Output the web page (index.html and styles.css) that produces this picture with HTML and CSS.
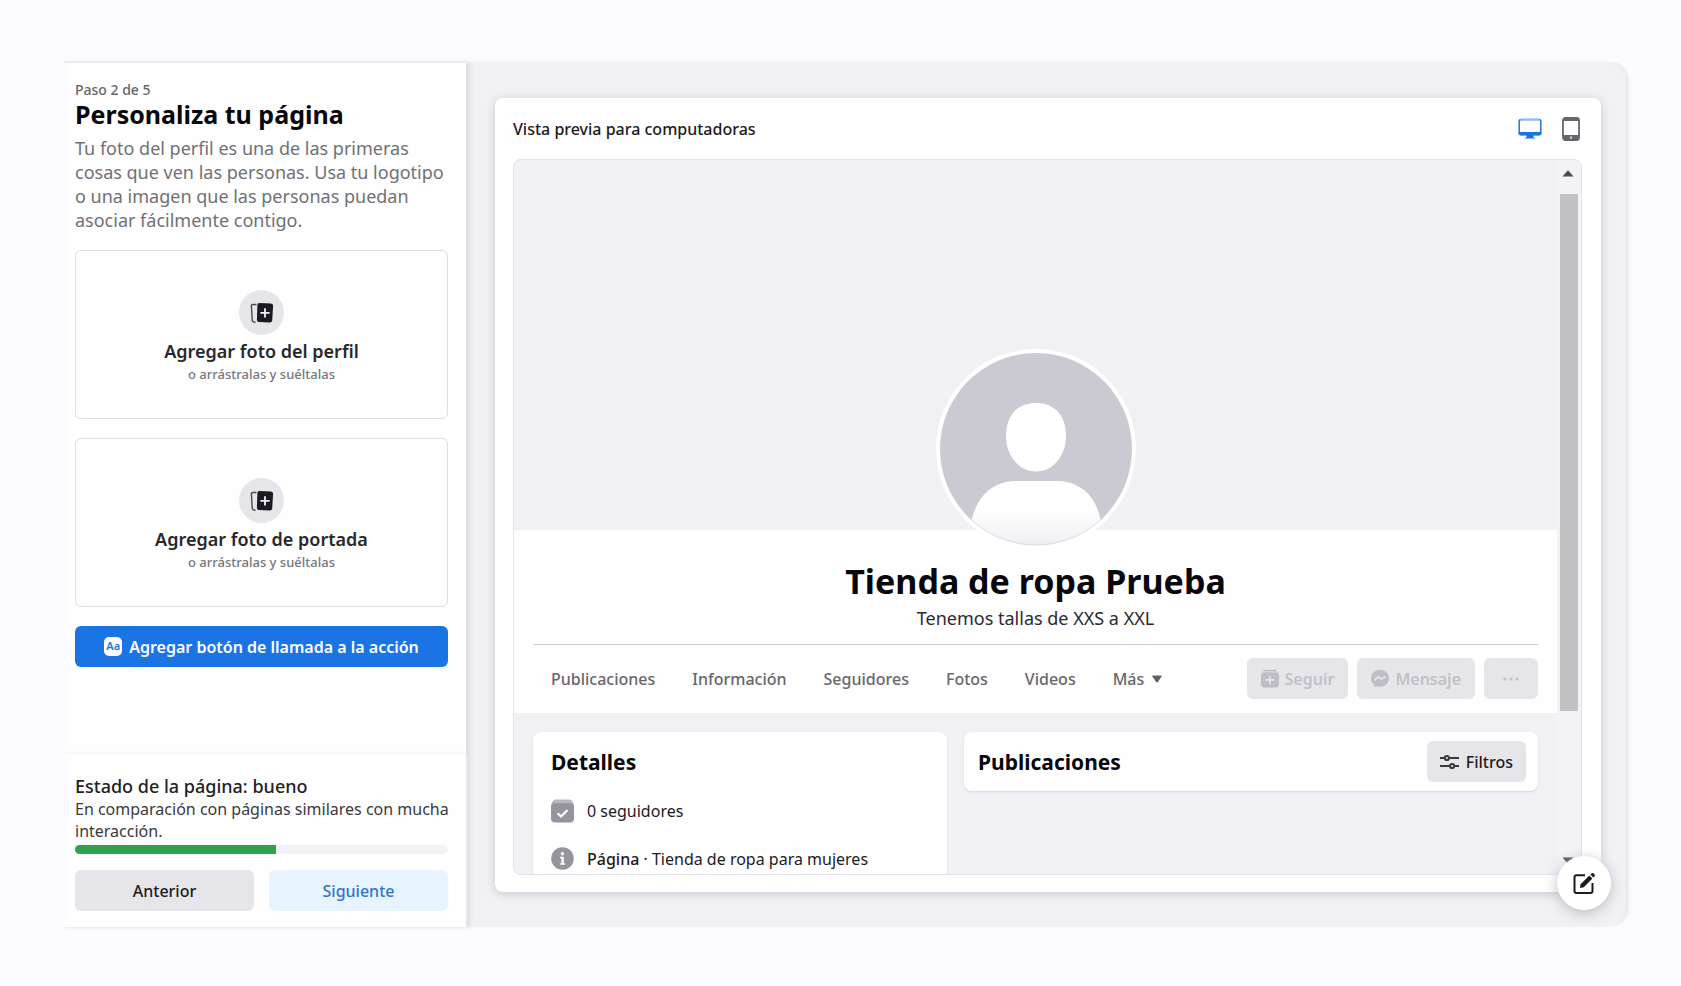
FILE: index.html
```html
<!DOCTYPE html>
<html lang="es">
<head>
<meta charset="utf-8">
<title>Personaliza tu página</title>
<link rel="stylesheet" href="styles.css">
</head>
<body>
<div class="app">
  <aside class="sidebar">
    <section class="setup">
      <p class="step">Paso 2 de 5</p>
      <h1 class="title">Personaliza tu página</h1>
      <p class="intro">Tu foto del perfil es una de las primeras cosas que ven las personas. Usa tu logotipo o una imagen que las personas puedan asociar fácilmente contigo.</p>
      <button class="drop" type="button">
        <span class="drop-icon"><svg width="24" height="24" viewBox="0 0 24 24"><path d="M6.500 3.500H3Q1.300 3.500 1.400 5L2.300 19.500Q2.500 21.200 5.500 21.200" fill="none" stroke="#4a4950" stroke-width="1.400"/><path d="M9.300 2L21 2.400Q23.200 2.600 23.100 4.800L22.200 19.500Q22 21.700 19.700 21.600L9 21.100Q6.800 20.900 6.900 18.700L7.400 4Q7.500 2 9.300 2Z" fill="#1b1a20"/><path d="M15 7.200V16.400M10.400 11.800H19.600" stroke="#f3f2f6" stroke-width="1.800"/></svg></span>
        <span class="drop-title">Agregar foto del perfil</span>
        <span class="drop-hint">o arrástralas y suéltalas</span>
      </button>
      <button class="drop" type="button">
        <span class="drop-icon"><svg width="24" height="24" viewBox="0 0 24 24"><path d="M6.500 3.500H3Q1.300 3.500 1.400 5L2.300 19.500Q2.500 21.200 5.500 21.200" fill="none" stroke="#4a4950" stroke-width="1.400"/><path d="M9.300 2L21 2.400Q23.200 2.600 23.100 4.800L22.200 19.500Q22 21.700 19.700 21.600L9 21.100Q6.800 20.900 6.900 18.700L7.400 4Q7.500 2 9.300 2Z" fill="#1b1a20"/><path d="M15 7.200V16.400M10.400 11.800H19.600" stroke="#f3f2f6" stroke-width="1.800"/></svg></span>
        <span class="drop-title">Agregar foto de portada</span>
        <span class="drop-hint">o arrástralas y suéltalas</span>
      </button>
      <button class="cta" type="button"><span class="cta-badge" aria-hidden="true">Aa</span>Agregar botón de llamada a la acción</button>
    </section>
    <footer class="status">
      <h2 class="status-title">Estado de la página: bueno</h2>
      <p class="status-text">En comparación con páginas similares con mucha interacción.</p>
      <div class="meter"><div class="meter-fill"></div></div>
      <div class="steps">
        <button class="nav-button" type="button">Anterior</button>
        <button class="nav-button next" type="button">Siguiente</button>
      </div>
    </footer>
  </aside>
  <main class="stage">
    <section class="preview">
      <header class="preview-bar">
        <h2 class="preview-title">Vista previa para computadoras</h2>
        <div class="devices">
          <button class="device" type="button" aria-label="Computadora"><svg width="24" height="22" viewBox="0 0 24 22"><rect x="1.200" y="1.500" width="21.600" height="15" rx="2" fill="#fbfdff" stroke="#2f7bd6" stroke-width="1.600"/><path d="M2.500 1.600H21.500" stroke="#8dbcf0" stroke-width="1.800"/><path d="M.6 14H23.400V15.500Q23.400 17.500 21.400 17.500H15.500V19L17.500 20.500H6.500L8.500 19V17.500H2.600Q.6 17.500.6 15.500Z" fill="#1b74e4"/></svg></button>
          <button class="device" type="button" aria-label="Celular"><svg width="18" height="24" viewBox="0 0 18 24"><rect x="1" y="1" width="16" height="22" rx="2.500" fill="#fff" stroke="#66656b" stroke-width="1.800"/><path d="M1 4V2.500Q1 .8 3 .8H15Q17 .8 17 2.500V4ZM1 18H17V21Q17 23.200 15 23.200H3Q1 23.200 1 21Z" fill="#66656b"/><circle cx="9" cy="20.600" r="1.300" fill="#c9c8cd"/></svg></button>
        </div>
      </header>
      <div class="frame">
        <div class="page">
          <div class="cover"></div>
          <div class="profile">
            <svg class="avatar" viewBox="0 0 200 200" role="img" aria-label="Foto del perfil">
              <defs><linearGradient id="body" x1="0" y1="0" x2="0" y2="1"><stop offset="0.400" stop-color="#fff"/><stop offset="1" stop-color="#edecf2"/></linearGradient><clipPath id="disc"><circle cx="100" cy="100" r="96"/></clipPath></defs>
              <circle cx="100" cy="100" r="100" fill="#fff"/>
              <circle cx="100" cy="100" r="96" fill="#cbcad3"/>
              <g clip-path="url(#disc)"><path d="M100 54C119 54 130 67 130 87C130 107 117 122.500 100 122.500C83 122.500 70 107 70 87C70 67 81 54 100 54Z" fill="#fff"/><path d="M34 200V182C37 148 57 132 80 132H121C144 132 164 148 166 182V200Z" fill="url(#body)"/></g>
              <path d="M32 167.800A96 96 0 0 0 168 167.800" fill="none" stroke="#dddce3" stroke-width="1"/>
            </svg>
            <h2 class="name">Tienda de ropa Prueba</h2>
            <p class="tagline">Tenemos tallas de XXS a XXL</p>
            <div class="toolbar">
              <nav class="tabs">
                <a href="#publicaciones">Publicaciones</a>
                <a href="#informacion">Información</a>
                <a href="#seguidores">Seguidores</a>
                <a href="#fotos">Fotos</a>
                <a href="#videos">Videos</a>
                <a class="more" href="#mas">Más <svg width="10" height="8" viewBox="0 0 10 8"><path d="M.8.5H9.200Q10 .8 9.600 1.600L5.700 7.200Q5 7.900 4.300 7.200L.4 1.600Q0 .8.8.5Z" fill="#626166"/></svg></a>
              </nav>
              <div class="actions">
                <button class="action" type="button" disabled><svg width="18" height="19" viewBox="0 0 19 20"><path d="M4 .8H15Q16.500.8 16.800 2.600H2.200Q2.500.8 4 .8Z" fill="#bfbec5"/><path d="M3 3.400H16Q19 3.400 19 6.500V16Q19 19.400 15.600 19.400H3.400Q0 19.400 0 16V6.500Q0 3.400 3 3.400Z" fill="#bfbec5"/><path d="M9.500 7V16M5 11.500H14" stroke="#e7e6eb" stroke-width="1.800"/></svg>Seguir</button>
                <button class="action" type="button" disabled><svg width="18" height="19" viewBox="0 0 19 20"><path d="M9.500.8C4.200.8 0 4.600 0 9.700C0 12.400 1.100 14.800 3 16.400V19.200L6 18.100C7.100 18.500 8.300 18.600 9.500 18.600C14.800 18.600 19 14.800 19 9.700C19 4.600 14.800.8 9.500.8Z" fill="#bfbec5"/><path d="M3.800 12L7.500 8L10.800 10.800L15.200 7.800" fill="none" stroke="#e7e6eb" stroke-width="1.800"/></svg>Mensaje</button>
                <button class="action dots" type="button" disabled aria-label="Más opciones"><svg width="16" height="4" viewBox="0 0 16 4"><circle cx="2" cy="2" r="1.600" fill="#c2c1c8"/><circle cx="8" cy="2" r="1.600" fill="#c2c1c8"/><circle cx="14" cy="2" r="1.600" fill="#c2c1c8"/></svg></button>
              </div>
            </div>
          </div>
          <div class="cards">
            <section class="details">
              <h3 class="card-title">Detalles</h3>
              <ul class="facts">
                <li><svg width="23" height="24" viewBox="0 0 23 24"><path d="M5 .5H18Q21.500.5 22.500 5H.5Q1.500.5 5 .5Z" fill="#b9b8c1"/><path d="M3 4.300H20Q23 4.300 23 7.500V19.500Q23 23.500 19 23.500H4Q0 23.500 0 19.500V7.500Q0 4.300 3 4.300Z" fill="#96959f"/><path d="M6.500 14.200L10 17.500L16.500 11" fill="none" stroke="#fff" stroke-width="2.200"/></svg><span>0 seguidores</span></li>
                <li><svg width="23" height="24" viewBox="0 0 23 24"><circle cx="11.500" cy="11.500" r="11.300" fill="#96959f"/><circle cx="11.500" cy="6.800" r="1.700" fill="#fff"/><path d="M9 9.800H12.800V16.300H14V17.800H9.200V16.300H10.400V11.300H9Z" fill="#fff"/></svg><span><b>Página</b> · Tienda de ropa para mujeres</span></li>
              </ul>
            </section>
            <section class="posts">
              <h3 class="card-title">Publicaciones</h3>
              <button class="filters" type="button"><svg width="19" height="16" viewBox="0 0 19 16"><path d="M0 4H4.300M9.500 4H19M0 12H9.500M14.700 12H19" stroke="#3a393f" stroke-width="1.800"/><circle cx="6.900" cy="4" r="2.100" fill="none" stroke="#3a393f" stroke-width="2"/><circle cx="12.100" cy="12" r="2.100" fill="none" stroke="#3a393f" stroke-width="2"/></svg>Filtros</button>
            </section>
          </div>
        </div>
        <div class="scroll">
          <svg width="12" height="7" viewBox="0 0 12 7"><path d="M6 .3L11.500 6.500H.5Z" fill="#4d4c52"/></svg>
          <div class="track"><div class="thumb"></div></div>
          <svg width="12" height="7" viewBox="0 0 12 7"><path d="M6 6.700L11.500.5H.5Z" fill="#4d4c52"/></svg>
        </div>
      </div>
    </section>
    <button class="compose" type="button" aria-label="Escribir"><svg width="24" height="24" viewBox="0 0 24 24"><path d="M13 4.200H4.500Q2.500 4.200 2.500 6.200V20Q2.500 22 4.500 22H18.500Q20.500 22 20.500 20V12" fill="none" stroke="#1b1a20" stroke-width="2"/><path d="M8 17L8.600 13.200L17.300 4.600L20.400 7.600L11.800 16.300Z" fill="#1b1a20"/><path d="M18.400 3.600L19.600 2.400Q20.600 1.500 21.600 2.400L22.500 3.300Q23.400 4.300 22.500 5.300L21.300 6.500Z" fill="#1b1a20"/></svg></button>
  </main>
</div>
</body>
</html>
```
FILE: styles.css
```css
* { box-sizing: border-box; }

body {
  margin: 0;
  min-height: 100vh;
  display: flex;
  padding: 63px 56px 59px 60px;
  background: #fbfaff;
  color: #1c1b20;
  font: 16px/22px "Noto Sans", "Open Sans", sans-serif;
}

h1, h2, h3, p, ul { margin: 0; padding: 0; }
button { font: inherit; color: inherit; border: 0; padding: 0; background: none; }
svg { display: block; flex: none; }

.app {
  flex: 1;
  display: flex;
  border-radius: 0 18px 18px 0;
  background: #f1f0f5;
  box-shadow: 4px -1px 2px #ecebf1;
}

/* Sidebar */
.sidebar {
  flex: none;
  width: 406px;
  display: flex;
  flex-direction: column;
  justify-content: space-between;
  background: linear-gradient(to right, #fbfaff, #fefeff 12px);
  box-shadow: 4px 0 4px #dddce3;
}
.setup { display: flex; flex-direction: column; padding: 18px 18px 0 15px; }
.step { font-size: 14px; line-height: 18px; font-weight: 500; color: #66656b; }
.title { font-size: 25px; line-height: 30px; font-weight: 700; color: #08070c; }
.intro { margin: 7px 0 18px; font-size: 18px; line-height: 24px; color: #707076; }

.drop {
  display: flex;
  flex-direction: column;
  align-items: center;
  margin-bottom: 19px;
  padding: 39px 0 34px;
  border: 1px solid #dfdee4;
  border-radius: 6px;
  background: #fefeff;
}
.drop-icon {
  display: grid;
  place-items: center;
  width: 45px;
  height: 45px;
  margin-bottom: 3px;
  border-radius: 50%;
  background: #e6e5ea;
}
.drop-title { font-size: 18px; line-height: 26px; font-weight: 600; color: #28272c; }
.drop-hint { font-size: 13px; line-height: 20px; font-weight: 500; color: #77767c; }

.cta {
  display: flex;
  align-items: center;
  justify-content: center;
  gap: 7px;
  height: 41px;
  border-radius: 6px;
  background: #1b74e4;
  color: #fff;
  font-weight: 600;
}
.cta-badge {
  width: 18px;
  height: 19px;
  border-radius: 5px;
  background: #fff;
  color: #1b74e4;
  font-size: 11px;
  line-height: 18px;
}

.status {
  padding: 20px 18px 16px 15px;
  box-shadow: 4px -2px 3px -2px #e6e5eb;
}
.status-title { font-size: 18px; line-height: 24px; font-weight: 500; color: #222126; }
.status-text { margin-right: -10px; color: #3a393e; }
.meter {
  height: 9px;
  margin: 3px 0 16px;
  border-radius: 5px;
  overflow: hidden;
  background: #f2f1f5;
}
.meter-fill { width: 54%; height: 100%; background: #31a24c; }
.steps { display: grid; grid-template-columns: 1fr 1fr; gap: 15px; }
.nav-button { height: 41px; border-radius: 6px; background: #e6e5ea; font-weight: 500; }
.next { background: #e7f3ff; color: #2f73cd; }

/* Preview */
.stage { position: relative; flex: 1; display: flex; padding: 35px 24px 35px 29px; }
.preview {
  flex: 1;
  display: flex;
  flex-direction: column;
  padding: 0 19px 17px 18px;
  border-radius: 8px;
  background: #fff;
  box-shadow: 0 2px 10px #c9c8cf;
}
.preview-bar { display: flex; align-items: center; justify-content: space-between; height: 61px; padding-right: 2px; }
.preview-title { font-size: 16px; font-weight: 500; }
.devices { display: flex; align-items: center; gap: 20px; }

.frame {
  flex: 1;
  display: flex;
  overflow: hidden;
  border: 1px solid #e3e2e8;
  border-radius: 8px;
  background: #f1f0f5;
}
.page { flex: 1; height: 714px; overflow: hidden; }
.cover { height: 370px; }
.profile {
  display: flex;
  flex-direction: column;
  align-items: center;
  padding: 0 19px;
  background: #fefeff;
}
.avatar { width: 200px; height: 200px; margin-top: -181px; margin-bottom: 9px; }
.name { font-size: 34px; line-height: 46px; font-weight: 700; color: #08070c; }
.tagline { font-size: 18px; line-height: 28px; color: #2b2a2f; }

.toolbar {
  align-self: stretch;
  display: flex;
  align-items: center;
  justify-content: space-between;
  margin-top: 12px;
  padding: 13px 0 14px 18px;
  border-top: 1px solid #cbcacf;
}
.tabs { display: flex; gap: 37px; font-weight: 500; }
.tabs a { color: #67666c; text-decoration: none; }
.more { display: flex; align-items: center; gap: 8px; }
.actions { display: flex; gap: 9px; }
.action {
  display: flex;
  align-items: center;
  gap: 6px;
  height: 41px;
  padding: 0 14px;
  border-radius: 6px;
  background: #e6e5ea;
  color: #c2c1c8;
  font-weight: 600;
}
.dots { padding: 0 19px; }

.cards { display: grid; grid-template-columns: 414fr 574fr; align-items: start; gap: 17px; padding: 19px; }
.details, .posts { border-radius: 8px; background: #fefeff; box-shadow: 0 1px 2px #d5d4da; }
.details { padding: 16px 18px; }
.card-title { font-size: 21px; line-height: 28px; font-weight: 700; color: #08070c; }
.facts { margin-top: 11px; list-style: none; }
.facts li { display: flex; align-items: center; gap: 13px; height: 48px; }
.facts b { font-weight: 500; }
.posts { display: flex; align-items: center; justify-content: space-between; height: 59px; padding: 0 12px 0 14px; }
.filters {
  display: flex;
  align-items: center;
  gap: 7px;
  height: 41px;
  padding: 0 13px;
  border-radius: 6px;
  background: #e6e5ea;
  font-weight: 500;
}

.scroll {
  flex: none;
  width: 24px;
  display: flex;
  flex-direction: column;
  align-items: center;
  padding: 10px 3px 10px 0;
  background: #f3f2f6;
}
.track { flex: 1; align-self: stretch; padding: 17px 0 0 3px; }
.thumb { height: 78%; background: #c1c0c3; }

.compose {
  position: absolute;
  right: 14px;
  bottom: 17px;
  display: grid;
  place-items: center;
  width: 54px;
  height: 54px;
  border-radius: 50%;
  background: #fff;
  box-shadow: 0 3px 14px #bcbbc2;
}
```
